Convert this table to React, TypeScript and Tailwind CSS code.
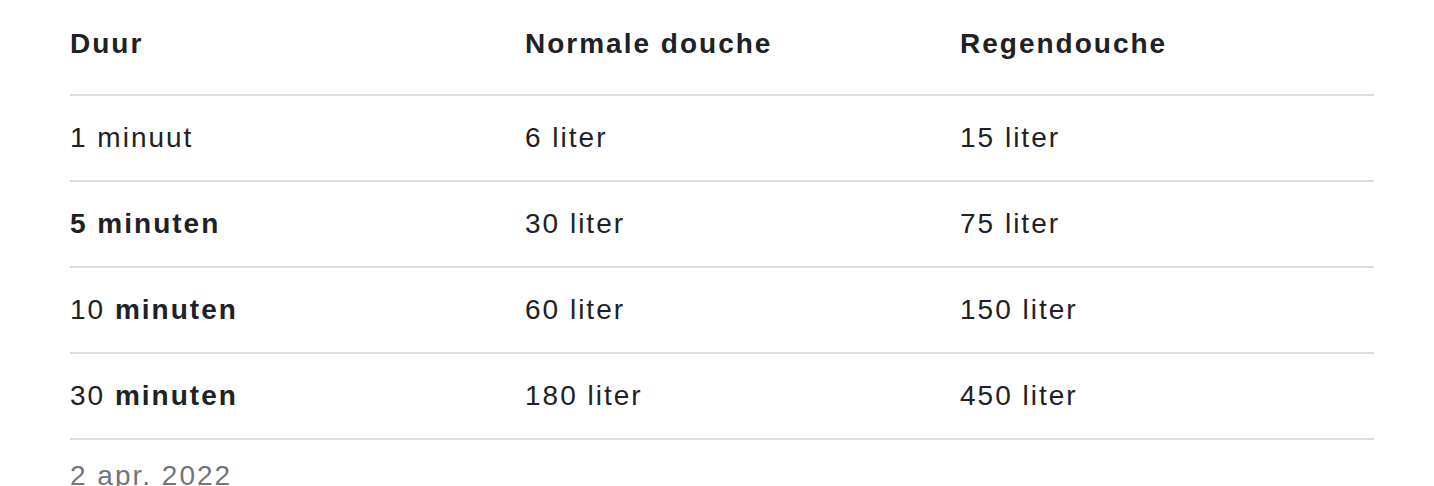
const rows: { dur: React.ReactNode; normal: string; rain: string }[] = [
  { dur: "1 minuut", normal: "6 liter", rain: "15 liter" },
  { dur: <b>5 minuten</b>, normal: "30 liter", rain: "75 liter" },
  { dur: <>10 <b>minuten</b></>, normal: "60 liter", rain: "150 liter" },
  { dur: <>30 <b>minuten</b></>, normal: "180 liter", rain: "450 liter" },
];

export default function App() {
  return (
    <div className="h-[486px] overflow-hidden bg-white font-['Liberation_Sans',Arial,sans-serif] text-[28px] leading-[36px] tracking-[2px] text-[#202124]">
      <div className="ml-[70px] w-[1304px]">
        <div className="grid h-[96px] grid-cols-[455px_435px_1fr] border-b-2 border-[#dadce0] pt-[26px] font-bold">
          <div>Duur</div>
          <div>Normale douche</div>
          <div>Regendouche</div>
        </div>
        {rows.map((r, i) => (
          <div
            key={i}
            className="grid h-[86px] grid-cols-[455px_435px_1fr] items-center border-b-2 border-[#dadce0]"
          >
            <div>{r.dur}</div>
            <div>{r.normal}</div>
            <div>{r.rain}</div>
          </div>
        ))}
        <div className="pt-[18px] text-[#70757a]">2 apr. 2022</div>
      </div>
    </div>
  );
}
